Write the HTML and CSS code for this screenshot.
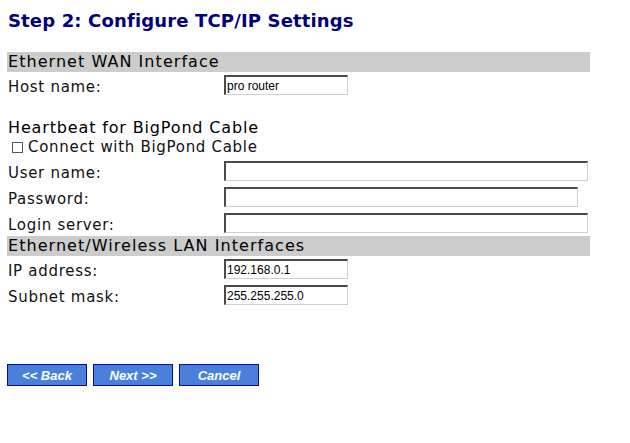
FILE: index.html
```html
<!DOCTYPE html>
<html>
<head>
<meta charset="utf-8">
<link rel="stylesheet" href="styles.css">
</head>
<body>
<div class="page">
  <h1 class="title">Step 2: Configure TCP/IP Settings</h1>
  <div class="bar">Ethernet WAN Interface</div>
  <div class="row"><span class="label">Host name:</span><input class="field short" value="pro router"></div>
  <div class="subhead">Heartbeat for BigPond Cable</div>
  <div class="check"><span class="box"></span>Connect with BigPond Cable</div>
  <div class="row"><span class="label">User name:</span><input class="field long"></div>
  <div class="row"><span class="label">Password:</span><input class="field mid" type="password"></div>
  <div class="row"><span class="label">Login server:</span><input class="field long"></div>
  <div class="bar">Ethernet/Wireless LAN Interfaces</div>
  <div class="row"><span class="label">IP address:</span><input class="field short" value="192.168.0.1"></div>
  <div class="row"><span class="label">Subnet mask:</span><input class="field short" value="255.255.255.0"></div>
  <div class="buttons">
    <button class="btn">&lt;&lt; Back</button>
    <button class="btn">Next &gt;&gt;</button>
    <button class="btn">Cancel</button>
  </div>
</div>
</body>
</html>
```
FILE: styles.css
```css
html, body {
  margin: 0;
  padding: 0;
  background: #ffffff;
}
.page {
  padding: 8px 0 0 7px;
  width: 583px;
  font-family: "DejaVu Sans", Verdana, sans-serif;
  font-size: 15px;
  color: #000000;
}
.title {
  margin: 0 0 20px 1px;
  padding-top: 2px;
  font-size: 18px;
  line-height: 22px;
  font-weight: bold;
  letter-spacing: 0.15px;
  color: #000080;
}
.bar {
  height: 20px;
  line-height: 20px;
  background: #cccccc;
  padding-left: 1px;
  font-size: 16px;
  letter-spacing: 1.05px;
  white-space: nowrap;
}
.row {
  display: flex;
  align-items: flex-start;
  height: 26px;
}
.label {
  width: 216px;
  padding-left: 1px;
  padding-top: 6px;
  line-height: 18px;
  letter-spacing: 0.7px;
  color: #111;
  white-space: nowrap;
}
.field {
  margin: 3px 0 0 0;
  height: 20px;
  box-sizing: border-box;
  border-top: 2px solid #4a4a4a;
  border-left: 2px solid #4a4a4a;
  border-right: 1px solid #cfcfcf;
  border-bottom: 1px solid #cfcfcf;
  padding: 0 0 0 1px;
  font-family: "Liberation Sans", Arial, sans-serif;
  font-size: 12px;
  letter-spacing: 0;
  color: #000;
  background: #fff;
  outline: none;
}
.short { width: 124px; }
.long { width: 364px; }
.mid { width: 354px; }
.subhead {
  margin-top: 20px;
  padding-left: 1px;
  line-height: 19px;
  font-size: 16px;
  letter-spacing: 0.85px;
}
.check {
  display: flex;
  align-items: center;
  height: 23px;
  padding-left: 5px;
  padding-top: 1px;
  box-sizing: border-box;
  line-height: 19px;
  margin-top: -2px;
  letter-spacing: 0.7px;
  color: #111;
}
.box {
  display: inline-block;
  width: 9px;
  height: 9px;
  border: 1px solid #555;
  margin-right: 5px;
  background: #fff;
}
.buttons {
  display: flex;
  gap: 6px;
  margin-top: 56px;
}
.btn {
  width: 80px;
  height: 22px;
  box-sizing: border-box;
  background: #4a7fdb;
  border: 1px solid #0a0aa0;
  color: #ffffff;
  font-family: "Liberation Sans", Arial, sans-serif;
  font-weight: bold;
  font-style: italic;
  font-size: 13px;
  padding: 0;
}
```
